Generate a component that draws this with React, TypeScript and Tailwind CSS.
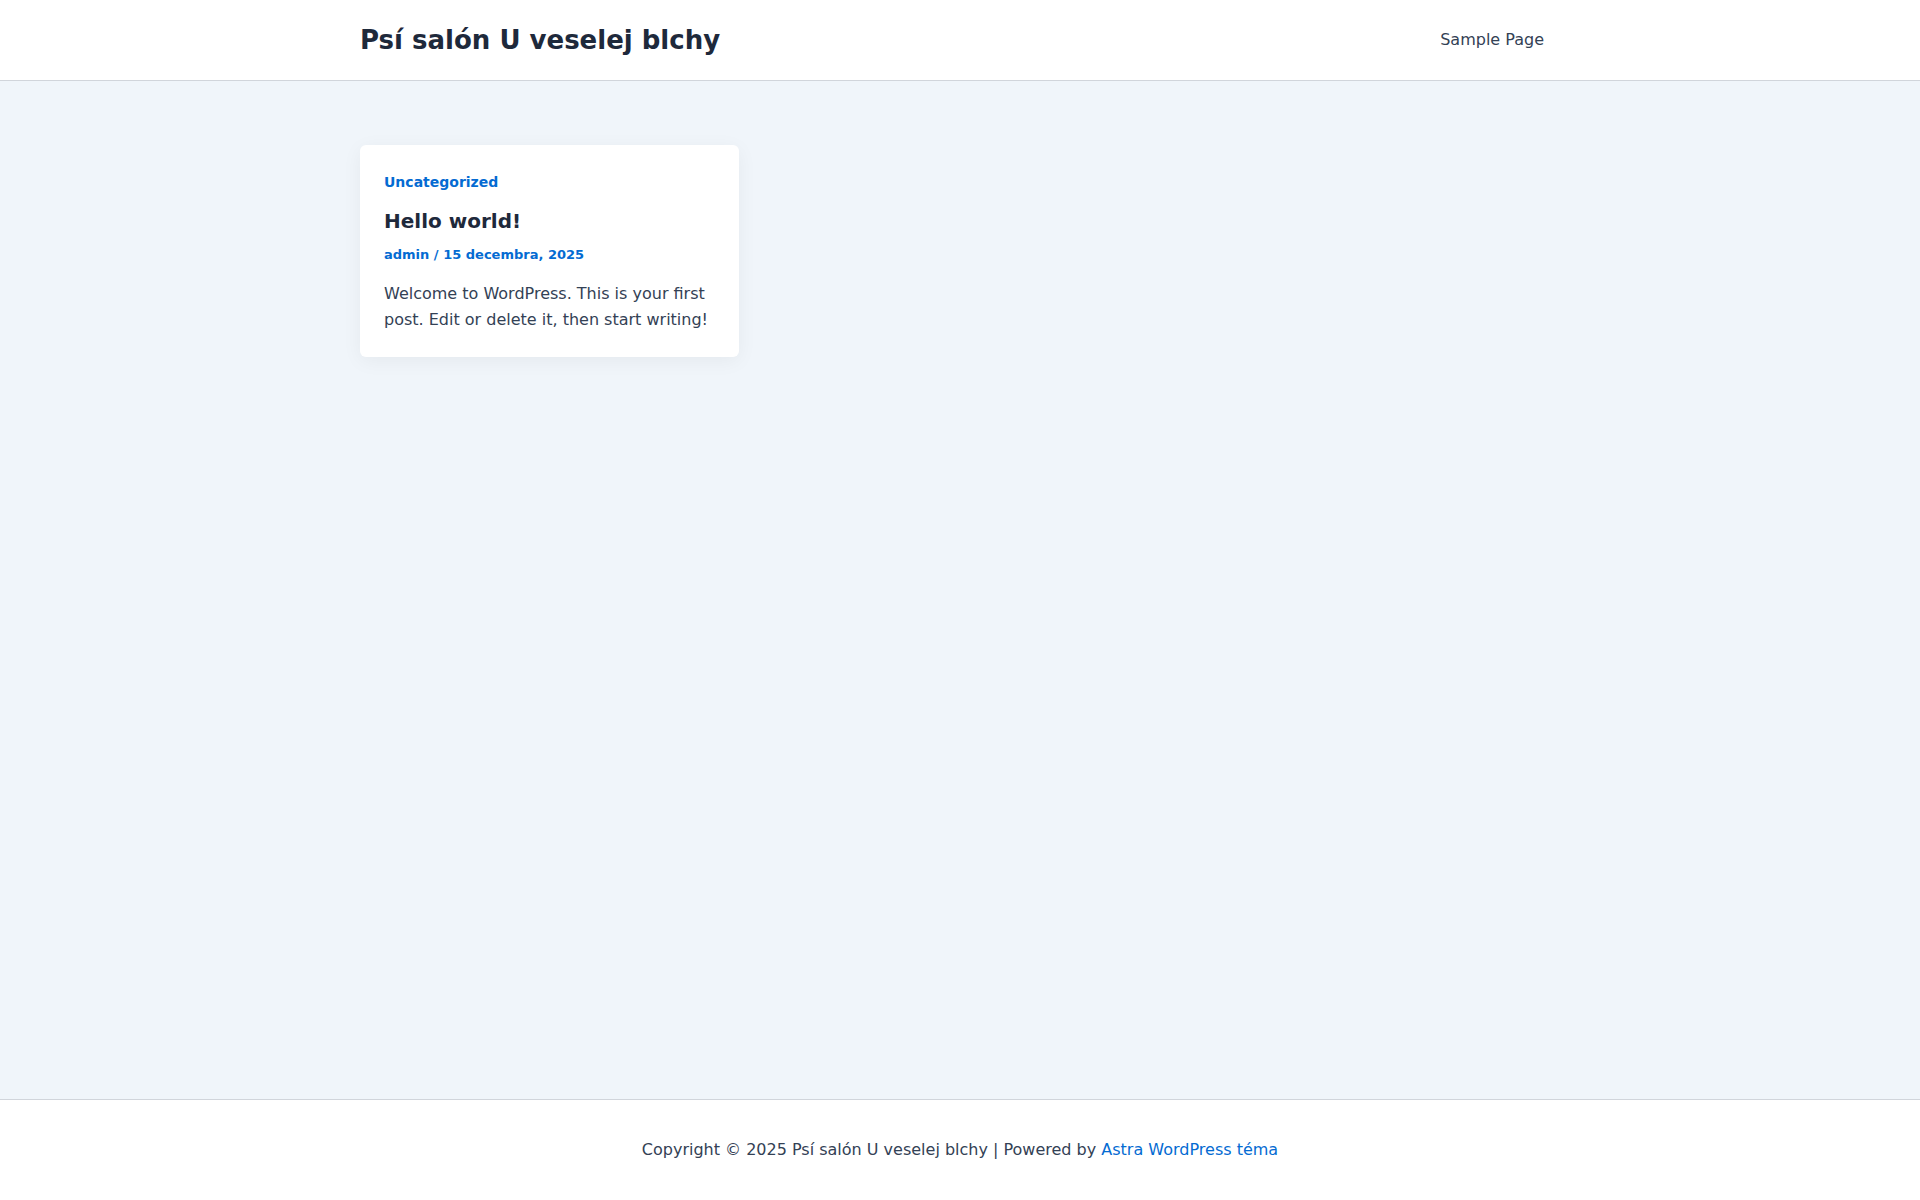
import React from 'react';

const SITE_NAME = 'Psí salón U veselej blchy';

function Header() {
  return (
    <header className="bg-white border-b border-[#d1d5db]">
      <div className="mx-auto max-w-[1240px] px-5 h-20 flex items-center justify-between">
        <a href="#" className="text-[26px] font-bold text-[#1e293b] leading-none -mt-px">
          {SITE_NAME}
        </a>
        <nav>
          <a href="#" className="px-4 text-[16px] text-[#334155]">
            Sample Page
          </a>
        </nav>
      </div>
    </header>
  );
}

function PostCard() {
  return (
    <article className="bg-white rounded-md shadow-[0_4px_20px_rgba(0,0,0,0.05)] px-6 pt-[25px] pb-6">
      <a href="#" className="block text-[14px] font-bold text-[#046bd2] leading-[24px]">
        Uncategorized
      </a>
      <h2 className="mt-[13px] text-[20px] font-bold text-[#1e293b] leading-[28px]">Hello world!</h2>
      <div className="mt-[10px] text-[13px] font-bold text-[#046bd2] leading-[20px]">
        <a href="#">admin</a> / <span>15 decembra, 2025</span>
      </div>
      <p className="mt-4 text-[16px] text-[#334155] leading-[26px]">
        Welcome to WordPress. This is your first post. Edit or delete it, then start writing!
      </p>
    </article>
  );
}

export default function App() {
  return (
    <div className="min-h-screen flex flex-col bg-[#f0f5fa]" style={{ fontFamily: '"DejaVu Sans", sans-serif' }}>
      <Header />
      <main className="flex-1">
        <div className="mx-auto max-w-[1240px] px-5 pt-16">
          <div className="grid grid-cols-3 gap-8">
            <PostCard />
          </div>
        </div>
      </main>
      <footer className="bg-white border-t border-[#d1d5db] py-10">
        <p className="text-center text-[16px] leading-[20px] text-[#334155]">
          Copyright © 2025 {SITE_NAME} | Powered by{' '}
          <a href="#" className="text-[#046bd2]">
            Astra WordPress téma
          </a>
        </p>
      </footer>
    </div>
  );
}
